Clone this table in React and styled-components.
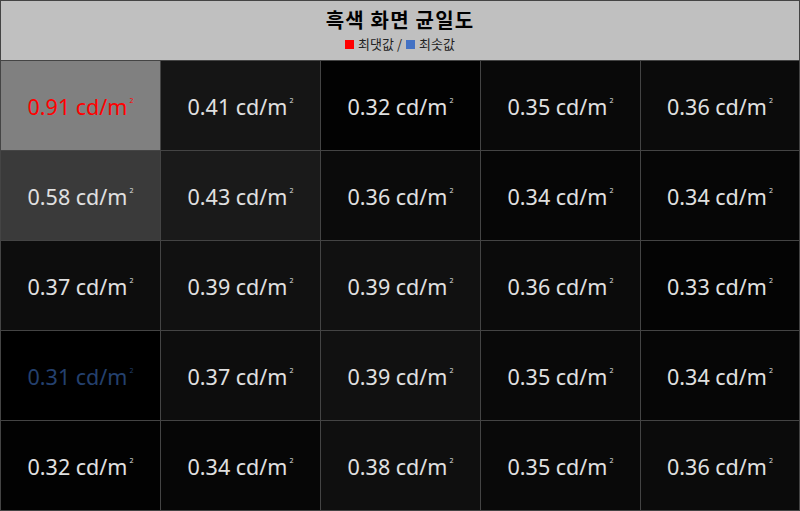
import React from "react";
import styled, { createGlobalStyle } from "styled-components";

const Global = createGlobalStyle`
  html, body { margin: 0; padding: 0; background: #ffffff; }
  body { font-family: "Noto Sans", "Noto Sans CJK KR", sans-serif; }
`;

const Board = styled.div`
  width: 800px;
  height: 511px;
  box-sizing: border-box;
  background: #444444;
  padding: 1px;
  display: grid;
  grid-template-columns: 159px 159px 159px 159px 158px;
  grid-template-rows: 59px repeat(5, 89px);
  gap: 1px;
`;

const Header = styled.div`
  grid-column: 1 / -1;
  background: #c0c0c0;
  display: flex;
  flex-direction: column;
  align-items: center;
  justify-content: flex-start;
  padding-top: 9px;
  gap: 7px;
  box-sizing: border-box;
`;

const Title = styled.div`
  font-family: "Noto Sans CJK KR", sans-serif;
  font-weight: 700;
  font-size: 20px;
  line-height: 20px;
  color: #000000;
  letter-spacing: 1.2px;
`;

const Legend = styled.div`
  display: flex;
  align-items: center;
  gap: 4px;
  font-family: "Noto Sans CJK KR", sans-serif;
  font-size: 13px;
  line-height: 14px;
  color: #222222;
`;

const Swatch = styled.span`
  display: inline-block;
  width: 9px;
  height: 9px;
  background: ${(p) => p.$color};
`;

const Cell = styled.div`
  background: ${(p) => p.$bg};
  color: ${(p) => p.$fg};
  display: flex;
  align-items: center;
  justify-content: center;
  font-family: "Noto Sans", sans-serif;
  font-size: 21.5px;
  padding-top: 1px;
`;

const Sup = styled.sup`
  font-size: 7px;
  vertical-align: 12px;
  line-height: 0;
  margin-left: 2px;
`;

const values = [
  [0.91, 0.41, 0.32, 0.35, 0.36],
  [0.58, 0.43, 0.36, 0.34, 0.34],
  [0.37, 0.39, 0.39, 0.36, 0.33],
  [0.31, 0.37, 0.39, 0.35, 0.34],
  [0.32, 0.34, 0.38, 0.35, 0.36],
];

const MIN = 0.31;
const MAX = 0.91;

function shade(v) {
  const g = Math.round(((v - MIN) / (MAX - MIN)) * 128);
  return `rgb(${g},${g},${g})`;
}

function textColor(v) {
  if (v === MAX) return "#ff0000";
  if (v === MIN) return "#24406e";
  return "#e0e0e0";
}

export default function App() {
  return (
    <>
      <Global />
      <Board>
        <Header>
          <Title>흑색 화면 균일도</Title>
          <Legend>
            <Swatch $color="#ff0000" />
            <span>최댓값 /</span>
            <Swatch $color="#4472c4" />
            <span>최솟값</span>
          </Legend>
        </Header>
        {values.flat().map((v, i) => (
          <Cell key={i} $bg={shade(v)} $fg={textColor(v)}>
            <span>
              {v.toFixed(2)} cd/m<Sup>2</Sup>
            </span>
          </Cell>
        ))}
      </Board>
    </>
  );
}
